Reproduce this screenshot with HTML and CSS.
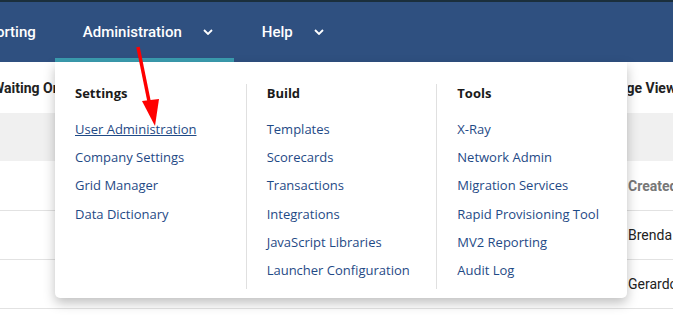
FILE: index.html
```html
<!DOCTYPE html>
<html lang="en">
<head>
    <meta charset="UTF-8" />
    <meta name="viewport" content="width=device-width, initial-scale=1.0" />
    <title>Administration Menu</title>
    <link rel="stylesheet" href="styles.css">
</head>
<body>
    <div class="topline"></div>
    <nav class="navbar">
        <div class="nav-item first">Reporting</div>
        <div class="nav-item active">
            Administration
            <svg class="chevron" width="10" height="6" viewBox="0 0 10 6"><path d="M1 1l4 4 4-4" fill="none" stroke="#fff" stroke-width="1.8" /></svg>
        </div>
        <div class="nav-item">
            Help
            <svg class="chevron" width="10" height="6" viewBox="0 0 10 6"><path d="M1 1l4 4 4-4" fill="none" stroke="#fff" stroke-width="1.8" /></svg>
        </div>
    </nav>

    <!-- Page content behind the dropdown -->
    <div class="page">
        <div class="row head">
            <span class="cell left">Waiting On</span>
            <span class="cell right"><span class="shift">Page Views</span></span>
        </div>
        <div class="row filter"></div>
        <div class="row">
            <span class="cell left"></span>
            <span class="cell right muted">Created By</span>
        </div>
        <div class="row">
            <span class="cell left"></span>
            <span class="cell right">Brenda Lee</span>
        </div>
        <div class="row">
            <span class="cell left"></span>
            <span class="cell right">Gerardo Ruiz</span>
        </div>
        <div class="row">
            <span class="cell left"></span>
            <span class="cell right">CCSAD</span>
        </div>
    </div>

    <!-- Dropdown -->
    <div class="dropdown">
        <div class="menu-col">
            <h4>Settings</h4>
            <a href="#" class="hover">User Administration</a>
            <a href="#">Company Settings</a>
            <a href="#">Grid Manager</a>
            <a href="#">Data Dictionary</a>
        </div>
        <div class="menu-col">
            <h4>Build</h4>
            <a href="#">Templates</a>
            <a href="#">Scorecards</a>
            <a href="#">Transactions</a>
            <a href="#">Integrations</a>
            <a href="#">JavaScript Libraries</a>
            <a href="#">Launcher Configuration</a>
        </div>
        <div class="menu-col">
            <h4>Tools</h4>
            <a href="#">X-Ray</a>
            <a href="#">Network Admin</a>
            <a href="#">Migration Services</a>
            <a href="#">Rapid Provisioning Tool</a>
            <a href="#">MV2 Reporting</a>
            <a href="#">Audit Log</a>
        </div>
    </div>

    <!-- Annotation arrow -->
    <svg class="arrow" width="40" height="90" viewBox="0 0 40 90">
        <line x1="8" y1="7" x2="20" y2="66" stroke="#f00" stroke-width="3.5" />
        <polygon points="12,61 29,59 25,86" fill="#f00" />
    </svg>
</body>
</html>
```

FILE: styles.css
```css
html {
    overflow: hidden;
}

body {
    margin: 0;
    font-family: Roboto, sans-serif;
    background: #fff;
    overflow: hidden;
    height: 315px;
    position: relative;
}

.topline {
    height: 2px;
    background: #1b2f3c;
}

.navbar {
    height: 60px;
    background: #2f5080;
    display: flex;
    align-items: stretch;
    color: #fff;
    font-size: 15px;
    font-weight: 500;
}

.nav-item {
    display: flex;
    align-items: center;
    gap: 21px;
    padding: 4px 28px 0;
    box-sizing: border-box;
    border-bottom: 4px solid transparent;
    flex-shrink: 0;
}

.nav-item.first {
    margin-left: -58px;
    padding-right: 19px;
}

.nav-item.active {
    border-bottom-color: #3a9caf;
    padding-right: 21px;
}

.chevron {
    display: block;
    flex-shrink: 0;
}

/* background grid */
.page {
    display: flex;
    flex-direction: column;
    font-size: 14px;
}

.row {
    display: flex;
    justify-content: space-between;
    align-items: center;
    flex-shrink: 0;
    height: 48px;
    border-bottom: 1px solid #e2e2e2;
    white-space: nowrap;
    overflow: hidden;
}

.row.head {
    height: 51px;
    border-bottom: none;
    font-weight: 700;
    color: #222;
}

.row.filter {
    height: 48px;
    background: #f0f0f0;
    border-bottom: none;
}

.row:nth-child(3) {
    height: 49px;
}

.cell.left {
    margin-left: -8px;
}

.cell.right {
    width: 45px;
    overflow: hidden;
    color: #222;
}

.shift {
    margin-left: -18px;
}

.cell.muted {
    color: #777;
    font-weight: 700;
}

/* dropdown panel */
.dropdown {
    position: absolute;
    top: 62px;
    left: 55px;
    width: 572px;
    height: 236px;
    background: #fff;
    border-radius: 0 0 5px 5px;
    box-shadow: 0 5px 12px rgba(0, 0, 0, 0.25);
    display: grid;
    grid-template-columns: repeat(3, 1fr);
    padding: 22px 0 23px;
    box-sizing: border-box;
    font-family: "Open Sans", sans-serif;
    font-size: 13px;
}

.menu-col {
    display: flex;
    flex-direction: column;
    padding-left: 20px;
    border-left: 1px solid #e0e0e0;
}

.menu-col:first-child {
    border-left: none;
}

.menu-col h4 {
    margin: 0 0 18px;
    font-size: 13px;
    font-weight: 700;
    color: #1a1a1a;
    line-height: 18px;
}

.menu-col a {
    color: #1f4a86;
    text-decoration: none;
    line-height: 18px;
    margin-bottom: 10.2px;
}

.menu-col a.hover {
    text-decoration: underline;
}

.arrow {
    position: absolute;
    left: 130px;
    top: 40px;
}
```
